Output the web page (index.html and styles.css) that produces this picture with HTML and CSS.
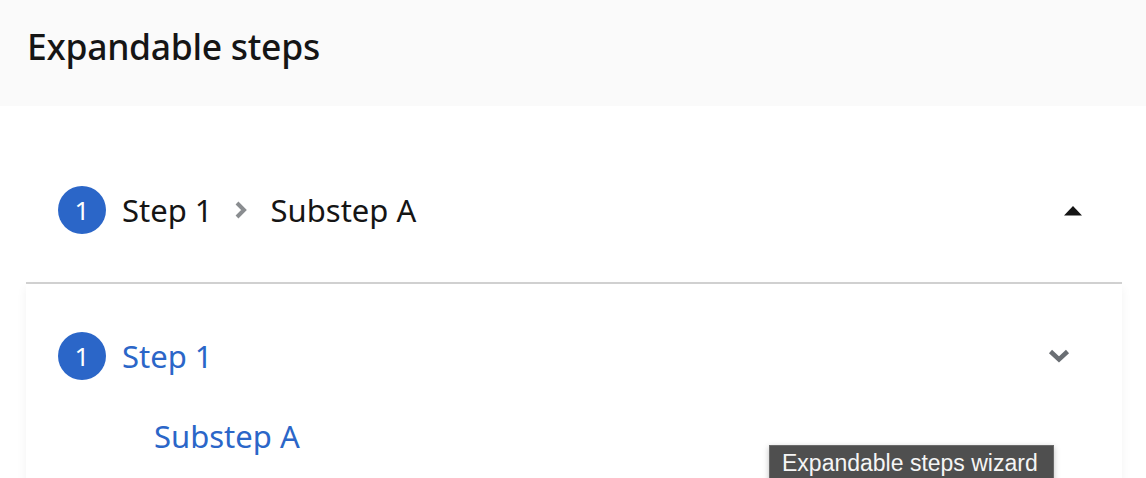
FILE: index.html
```html
<!DOCTYPE html>
<html>
<head>
<meta charset="utf-8">
<link rel="stylesheet" href="styles.css">
</head>
<body>
<header class="page-header">
  <h1 class="title">Expandable steps</h1>
</header>
<main class="wizard">
  <div class="toggle">
    <div class="toggle-steps">
      <span class="num">1</span>
      <span class="toggle-text">Step 1</span>
      <svg class="sep" width="14" height="18" viewBox="0 0 14 18"><path d="M3 2 L10 9 L3 16" fill="none" stroke="#8a8d90" stroke-width="4"/></svg>
      <span class="toggle-text">Substep A</span>
    </div>
    <svg class="caret" width="20" height="12" viewBox="0 0 20 12"><path d="M1 11.5 L10 2 L19 11.5 Z" fill="#151515"/></svg>
  </div>
  <nav class="panel">
    <div class="nav-item">
      <span class="num">1</span>
      <span class="nav-text">Step 1</span>
      <svg class="chev" width="22" height="14" viewBox="0 0 22 14"><path d="M2.5 2.5 L11 10.5 L19.5 2.5" fill="none" stroke="#6a6e73" stroke-width="4.5"/></svg>
    </div>
    <div class="sub-item">Substep A</div>
  </nav>
</main>
<div class="tooltip">Expandable steps wizard</div>
</body>
</html>
```
FILE: styles.css
```css
html, body {
  margin: 0;
  padding: 0;
  background: #ffffff;
  font-family: "Noto Sans", "Open Sans", sans-serif;
  color: #151515;
  overflow: hidden;
}
.page-header {
  background: #fafafa;
  height: 106px;
  padding-left: 27px;
  display: flex;
  align-items: center;
  box-sizing: border-box;
}
.title {
  margin: 0 0 14px 0;
  font-size: 35.5px;
  font-weight: 500;
  letter-spacing: -0.3px;
}
.wizard {
  margin: 0 24px 0 26px;
}
.toggle {
  display: flex;
  align-items: center;
  justify-content: space-between;
  padding: 80px 39px 48px 32px;
  border-bottom: 2px solid #d2d2d2;
}
.toggle-steps {
  display: flex;
  align-items: center;
}
.num {
  width: 48px;
  height: 48px;
  border-radius: 50%;
  background: #2b66c8;
  color: #fff;
  display: flex;
  align-items: center;
  justify-content: center;
  font-size: 26px;
  flex: none;
}
.toggle-text {
  font-size: 31px;
  margin-left: 16px;
}
.sep {
  margin: 0 23px 0 21px;
}
.toggle-steps .sep + .toggle-text {
  margin-left: 0;
}
.panel {
  box-shadow: 0 4px 10px rgba(0,0,0,0.06);
  padding: 48px 52px 30px 32px;
}
.nav-item {
  display: flex;
  align-items: center;
}
.nav-text {
  font-size: 31px;
  color: #2b66c8;
  margin-left: 16px;
  flex: 1;
}
.sub-item {
  font-size: 31px;
  color: #2b66c8;
  margin-top: 35px;
  padding-left: 96px;
}
.tooltip {
  position: absolute;
  left: 769px;
  top: 445px;
  width: 285px;
  height: 40px;
  box-sizing: border-box;
  background: #4f4f4f;
  border: 1px solid #6a6a6a;
  color: #f5f5f5;
  font-family: "Liberation Sans", sans-serif;
  font-size: 23px;
  padding: 4px 0 0 12px;
  white-space: nowrap;
  box-shadow: 0 2px 6px rgba(0,0,0,0.25);
}
```
